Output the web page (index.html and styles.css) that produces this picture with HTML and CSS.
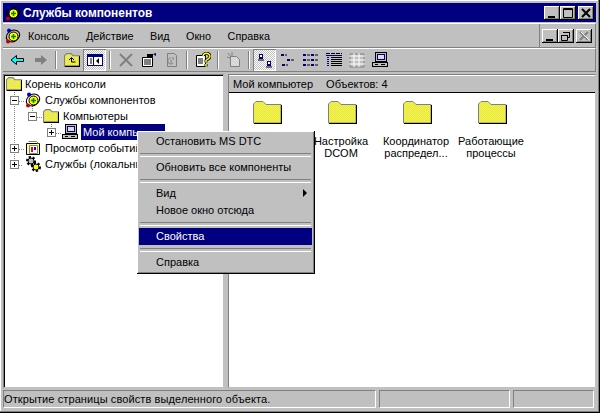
FILE: index.html
```html
<!DOCTYPE html>
<html lang="ru">
<head>
    <meta charset="UTF-8">
    <title>Службы компонентов</title>
    <link rel="stylesheet" href="styles.css">
</head>
<body>
    <svg class="defs" width="0" height="0">
        <defs>
            <pattern id="dither" width="2" height="2" patternUnits="userSpaceOnUse">
                <rect width="2" height="2" fill="#ffff00" shape-rendering="crispEdges"/>
                <rect width="1" height="1" fill="#dcdc90" shape-rendering="crispEdges"/>
                <rect x="1" y="1" width="1" height="1" fill="#dcdc90" shape-rendering="crispEdges"/>
            </pattern>
            <symbol id="folder" viewBox="0 0 15 13">
                <path d="M.5 12.500V2.500L2.500.5h4l2 2h6v10z" fill="url(#dither)" stroke="#808080"/>
                <path d="M1 12.500h14M14.500 3v10" stroke="#000"/>
            </symbol>
            <symbol id="bigfolder" viewBox="0 0 29 24">
                <path d="M.5 23V4L3 1.500h7L13 4.500h15V23z" fill="url(#dither)" stroke="#808080"/>
                <path d="M1 23.500h28M28.500 5v19" stroke="#000"/>
            </symbol>
            <symbol id="mmc" viewBox="0 0 16 16">
                <ellipse cx="8" cy="8" rx="7" ry="5.500" fill="none" stroke="#000" transform="rotate(-30 8 8)"/>
                <circle cx="8.500" cy="8.500" r="4.500" fill="#ffff00" stroke="#000"/>
                <path d="M8.500 6v5M6 8.500h5" stroke="#008000" stroke-width="1.500"/>
                <circle cx="4" cy="2.500" r="2" fill="#0000c0"/>
                <circle cx="3" cy="13.500" r="2" fill="#c00000"/>
            </symbol>
            <symbol id="computer" viewBox="0 0 16 16">
                <rect x="3.500" y=".5" width="11" height="9" fill="#c0c0c0" stroke="#000"/>
                <rect x="5.500" y="2.500" width="7" height="5" fill="#dcdcdc" stroke="#000080"/>
                <rect x=".5" y="10.500" width="15" height="4" fill="#c0c0c0" stroke="#000"/>
                <path d="M3 12.500h3M9 12.500h4" stroke="#000"/>
            </symbol>
        </defs>
    </svg>

    <div class="window">
        <div class="titlebar">
            <svg class="title-icon"><use href="#mmc"/></svg>
            <span class="title-text">Службы компонентов</span>
            <button class="cap-btn first"><svg width="16" height="14"><path d="M4 10h7v2H4z"/></svg></button>
            <button class="cap-btn"><svg width="16" height="14"><path d="M3.500 2.500h9v9h-9zM3 3.500h10" fill="none" stroke="#000"/></svg></button>
            <button class="cap-btn gap"><svg width="16" height="14"><path d="M4 3l8 8M12 3l-8 8" stroke="#000" stroke-width="2"/></svg></button>
        </div>

        <div class="menubar">
            <svg class="menu-icon"><use href="#mmc"/></svg>
            <span class="menu-item">Консоль</span>
            <span class="menu-item">Действие</span>
            <span class="menu-item">Вид</span>
            <span class="menu-item">Окно</span>
            <span class="menu-item">Справка</span>
            <div class="mdi-btns">
                <button class="cap-btn first"><svg width="16" height="14"><path d="M4 10h7v2H4z"/></svg></button>
                <button class="cap-btn"><svg width="16" height="14"><path d="M5.500 3.500h6v5h-2M3.500 6.500h6v5h-6zM3 6.500h7M5 3.500h7" fill="none" stroke="#000"/></svg></button>
                <button class="cap-btn gap"><svg width="16" height="14"><path d="M4 3l8 8M12 3l-8 8" stroke="#808080" stroke-width="2"/><path d="M5 3l8 8" stroke="#fff"/></svg></button>
            </div>
        </div>

        <div class="toolbar">
            <span class="tool"><svg width="16" height="16"><path d="M1 8l5.500-4.500v3h7v3h-7v3z" fill="#00ffff" stroke="#000"/></svg></span>
            <span class="tool"><svg width="16" height="16"><path d="M14 8L8 3v3H2v4h6v3z" fill="#808080"/></svg></span>
            <span class="sep"></span>
            <span class="tool"><svg width="16" height="16"><use href="#folder"/><path d="M5 8l2.500-2.500L10 8M7.500 6v4h4" fill="none" stroke="#000"/></svg></span>
            <span class="tool on"><svg width="16" height="16"><rect x=".5" y="2.500" width="15" height="11" fill="#fff" stroke="#000080"/><rect x="1" y="3" width="14" height="2" fill="#000080"/><path d="M6.500 3v10" stroke="#000080"/><path d="M3 7h2M3 9h2M3 11h2" stroke="#000"/><path d="M12 6v6l-3-3z"/></svg></span>
            <span class="sep"></span>
            <span class="tool"><svg width="16" height="16"><path d="M2 2l12 12M14 2L2 14" stroke="#808080" stroke-width="2"/></svg></span>
            <span class="tool"><svg width="16" height="16"><path d="M1.500 5.500h10v9h-10z" fill="#fff" stroke="#000"/><path d="M3 8h7M3 10h7M3 12h7" stroke="#000"/><path d="M6 2h6v3H6z" fill="#000"/><path d="M12 2l3-1v3z" fill="#000080"/></svg></span>
            <span class="tool"><svg width="16" height="16"><path d="M3.500 1.500h7l2 2v11h-9z" fill="none" stroke="#808080"/><path d="M7 6a3 3 0 1 0 2 5M9 5v3M7 11v-3" fill="none" stroke="#808080"/></svg></span>
            <span class="sep"></span>
            <span class="tool"><svg width="16" height="16"><path d="M1.500 3.500h9v11h-9z" fill="#fff" stroke="#000"/><path d="M3 7h5M3 9h5M3 11h5" stroke="#000"/><path d="M8 4a3.500 3 0 1 1 5 3l-2 1.500v2M11 12v2.500" fill="none" stroke="#000" stroke-width="3"/><path d="M8 4a3.500 3 0 1 1 5 3l-2 1.500v2M11 12v2.500" fill="none" stroke="#ffff00" stroke-width="1.500"/></svg></span>
            <span class="sep"></span>
            <span class="tool"><svg width="16" height="16"><path d="M4.500 4.500h6l3 3v7h-9z" fill="#d8d8d8" stroke="#808080"/><path d="M2 1l3 4M6 0v4M1 5l3 1" stroke="#808080"/></svg></span>
            <span class="sep"></span>
            <span class="tool on"><svg width="16" height="16"><path d="M2 2h4v5H2zM10 9h4v5h-4z" fill="#000080"/><path d="M3 3h2v2H3zM11 10h2v2h-2z" fill="#fff"/><path d="M1 8h6M9 15h6" stroke="#000"/></svg></span>
            <span class="tool"><svg width="16" height="16"><path d="M1 2h3v2H1zM7 7h3v2H7zM2 12h3v2H2z" fill="#000080"/><path d="M5 3h2M11 8h3M6 13h2" stroke="#000"/></svg></span>
            <span class="tool"><svg width="16" height="16"><path d="M0 2h3v2H0zM8 2h3v2H8zM0 7h3v2H0zM8 7h3v2H8zM0 12h3v2H0zM8 12h3v2H8z" fill="#000080"/><path d="M4 3h3M12 3h3M4 8h3M12 8h3M4 13h3M12 13h3" stroke="#000"/></svg></span>
            <span class="tool"><svg width="16" height="16"><path d="M0 1.500h16" stroke="#000" stroke-dasharray="4 1"/><path d="M0 3.500h16" stroke="#000080"/><path d="M5 5h11v1H5zM5 7h11v1H5zM5 9h11v1H5zM5 11h11v1H5zM5 13h11v1H5z"/><path d="M1 5h2v1H1zM1 7h2v1H1zM1 9h2v1H1zM1 11h2v1H1zM1 13h2v1H1z" fill="#000080"/></svg></span>
            <span class="tool"><svg width="16" height="16"><path d="M1 2h14v13H1z" fill="none" stroke="#808080"/><path d="M0 4h16M5 1v14M10 1v14M0 8h16M0 12h16" stroke="#fff"/></svg></span>
            <span class="tool"><svg width="16" height="16"><use href="#computer"/></svg></span>
        </div>

        <div class="panes">
            <div class="tree">
                <svg class="tree-lines" width="90" height="110">
                    <path d="M13.500 14v76M31.500 30v14M50.500 46v12M18 27.500h6M36 43.500h8M55 59.500h6M18 75.500h6M18 91.500h4" fill="none" stroke="#808080" stroke-dasharray="1 1"/>
                </svg>
                <div class="node root">
                    <svg class="node-icon"><use href="#folder"/></svg>
                    <span class="label">Корень консоли</span>
                </div>
                <div class="node lvl1">
                    <span class="box minus"></span>
                    <svg class="node-icon"><use href="#mmc"/></svg>
                    <span class="label">Службы компонентов</span>
                </div>
                <div class="node lvl2">
                    <span class="box minus"></span>
                    <svg class="node-icon"><use href="#folder"/></svg>
                    <span class="label">Компьютеры</span>
                </div>
                <div class="node lvl3">
                    <span class="box plus"></span>
                    <svg class="node-icon"><use href="#computer"/></svg>
                    <span class="label selected"><span class="cut">Мой компьютер</span></span>
                </div>
                <div class="node lvl1">
                    <span class="box plus"></span>
                    <svg class="node-icon"><path d="M1.500 3.500h13v11h-13z" fill="#ffff80" stroke="#000"/><path d="M3.500 1.500h8l2 2" fill="#ffff80" stroke="#808080"/><path d="M4.500 5.500h8v8h-8z" fill="#fff" stroke="#808080"/><path d="M6 7h2v5H6z" fill="#f00"/><path d="M9 7h2v3H9z" fill="#00f"/></svg>
                    <span class="label">Просмотр событий</span>
                </div>
                <div class="node lvl1">
                    <span class="box plus"></span>
                    <svg class="node-icon"><circle cx="6" cy="5" r="3.500" fill="none" stroke="#000" stroke-width="3" stroke-dasharray="2 1.500"/><circle cx="6" cy="5" r="3" fill="#c0c0c0" stroke="#000"/><circle cx="11" cy="11" r="3.500" fill="none" stroke="#000" stroke-width="3" stroke-dasharray="2 1.500"/><circle cx="11" cy="11" r="3" fill="#ffff00" stroke="#000"/></svg>
                    <span class="label">Службы (локальные)</span>
                </div>
            </div>

            <div class="list">
                <div class="list-head">
                    <span>Мой компьютер</span>
                    <span>Объектов: 4</span>
                </div>
                <div class="icons">
                    <div class="icon-item"><svg class="big-icon"><use href="#bigfolder"/></svg></div>
                    <div class="icon-item"><svg class="big-icon"><use href="#bigfolder"/></svg><span>Настройка DCOM</span></div>
                    <div class="icon-item"><svg class="big-icon"><use href="#bigfolder"/></svg><span>Координатор распредел...</span></div>
                    <div class="icon-item"><svg class="big-icon"><use href="#bigfolder"/></svg><span>Работающие процессы</span></div>
                </div>
            </div>
        </div>

        <div class="status">
            <div class="cell main">Открытие страницы свойств выделенного объекта.</div>
            <div class="cell mid"></div>
            <div class="cell end"></div>
        </div>
    </div>

    <div class="context-menu">
        <div class="ctx-item">Остановить MS DTC</div>
        <div class="ctx-sep"></div>
        <div class="ctx-item">Обновить все компоненты</div>
        <div class="ctx-sep"></div>
        <div class="ctx-item">Вид<span class="arrow"></span></div>
        <div class="ctx-item">Новое окно отсюда</div>
        <div class="ctx-sep"></div>
        <div class="ctx-item active">Свойства</div>
        <div class="ctx-sep"></div>
        <div class="ctx-item">Справка</div>
    </div>
</body>
</html>
```

FILE: styles.css
```css
* {
    box-sizing: border-box;
}
html, body {
    margin: 0;
    padding: 0;
}
body {
    width: 600px;
    height: 413px;
    overflow: hidden;
    position: relative;
    font-family: "Liberation Sans", Arial, sans-serif;
    font-size: 11px;
    color: #000;
    background: #c0c0c0;
}
.defs {
    position: absolute;
}
svg {
    display: block;
    flex: none;
}

/* window frame */
.window {
    width: 600px;
    height: 413px;
    padding: 3px 3px 4px;
    display: flex;
    flex-direction: column;
    background: #c0c0c0;
    border-right: 1px solid #000;
    border-bottom: 1px solid #000;
    box-shadow: inset -1px -1px 0 #808080, inset 1px 1px 0 #fff;
}
.titlebar {
    height: 19px;
    flex: none;
    display: flex;
    align-items: center;
    padding: 0 2px;
    background: #000080;
    color: #fff;
}
.title-icon {
    width: 16px;
    height: 16px;
    margin-right: 2px;
}
.title-text {
    font-weight: bold;
    font-size: 11.900px;
    flex: 1;
}
.cap-btn {
    width: 16px;
    height: 14px;
    padding: 0;
    background: #c0c0c0;
    border: none;
    box-shadow: inset -1px -1px 0 #000, inset 1px 1px 0 #fff, inset -2px -2px 0 #808080;
}
.cap-btn.gap {
    margin-left: 2px;
}

/* menu and toolbar */
.menubar {
    height: 25px;
    margin-top: 1px;
    flex: none;
    display: flex;
    align-items: center;
    padding: 0 0 0 2px;
    font-size: 10.800px;
    border-top: 1px solid #fff;
    border-bottom: 1px solid #808080;
    border-right: 1px solid #808080;
}
.menu-icon {
    width: 16px;
    height: 16px;
    margin-right: 2px;
}
.menu-item {
    padding: 0 5px;
    margin-right: 6.500px;
}
.mdi-btns {
    margin-left: auto;
    height: 100%;
    display: flex;
    align-items: center;
    padding: 0 3px 0 2px;
    border-left: 1px solid #808080;
}
.toolbar {
    height: 24px;
    flex: none;
    display: flex;
    align-items: center;
    padding-left: 3px;
    border-top: 1px solid #fff;
    border-bottom: 1px solid #808080;
    border-right: 1px solid #808080;
}
.tool {
    width: 23px;
    height: 22px;
    display: flex;
    align-items: center;
    justify-content: center;
}
.tool.on {
    background: repeating-conic-gradient(#fff 0 25%, #c0c0c0 0 50%) 0 0 / 2px 2px;
    box-shadow: inset 1px 1px 0 #808080, inset -1px -1px 0 #fff;
}
.sep {
    width: 2px;
    height: 18px;
    margin: 0 3px;
    border-left: 1px solid #808080;
    border-right: 1px solid #fff;
}

/* panes */
.panes {
    flex: 1;
    min-height: 0;
    display: flex;
    gap: 4px;
    margin-top: 2px;
    padding-bottom: 2px;
}
.tree {
    width: 221px;
    position: relative;
    padding: 1px 0 0 3px;
    background: #fff;
    overflow: hidden;
    border: 1px solid;
    border-color: #808080 #c0c0c0 #c0c0c0 #808080;
    box-shadow: inset 1px 1px 0 #000;
}
.tree-lines {
    position: absolute;
    left: -3px;
    top: -1px;
}
.node {
    height: 16px;
    display: flex;
    align-items: center;
    position: relative;
    white-space: nowrap;
}
.node.root {
    margin-left: -1px;
}
.node.root .node-icon {
    margin-right: 1px;
}
.node.lvl1 {
    padding-left: 3px;
}
.node.lvl2 {
    padding-left: 21px;
}
.node.lvl3 {
    padding-left: 40px;
}
.box {
    width: 9px;
    height: 9px;
    margin-right: 6px;
    flex: none;
    border: 1px solid #808080;
    background: #fff;
}
.box.minus {
    background: linear-gradient(#000, #000) center / 5px 1px no-repeat #fff;
}
.box.plus {
    background:
        linear-gradient(#000, #000) center / 5px 1px no-repeat,
        linear-gradient(#000, #000) center / 1px 5px no-repeat,
        #fff;
}
.node-icon {
    width: 16px;
    height: 16px;
    margin-right: 2px;
}
.label {
    padding: 1px 2px;
    line-height: 14px;
}
.selected {
    margin-left: 1px;
    width: 84px;
    background: #000080;
    color: #fff;
}
.cut {
    display: block;
    width: 54px;
    overflow: hidden;
}
.list {
    flex: 1;
    display: flex;
    flex-direction: column;
    background: #fff;
    border: 1px solid;
    border-color: #808080 #c0c0c0 #c0c0c0 #808080;
}
.list-head {
    height: 18px;
    flex: none;
    display: flex;
    gap: 13px;
    align-items: center;
    padding-left: 4px;
    background: #c0c0c0;
    border-top: 1px solid #fff;
    border-bottom: 1px solid #000;
}
.icons {
    display: grid;
    grid-template-columns: repeat(4, 75px);
    padding: 7px 0 0 1px;
}
.icon-item {
    display: flex;
    flex-direction: column;
    align-items: center;
    text-align: center;
    line-height: 12px;
}
.icon-item span {
    padding-right: 3px;
}
.big-icon {
    width: 29px;
    height: 24px;
    margin-bottom: 11px;
}

/* status bar */
.status {
    height: 18px;
    flex: none;
    display: flex;
    gap: 3px;
}
.cell {
    line-height: 16px;
    white-space: nowrap;
    letter-spacing: .1px;
    border: 1px solid;
    border-color: #808080 #fff #fff #808080;
}
.cell.main {
    width: 373px;
}
.cell.mid {
    width: 131px;
}
.cell.end {
    flex: 1;
    margin-right: 2px;
}

/* context menu */
.context-menu {
    position: absolute;
    left: 137px;
    top: 131px;
    width: 178px;
    padding: 2px 3px 3px 2px;
    background: #c0c0c0;
    box-shadow: inset -1px -1px 0 #000, inset 1px 1px 0 #fff, inset -2px -2px 0 #808080;
}
.ctx-item {
    height: 17px;
    padding-left: 17px;
    line-height: 16px;
    position: relative;
}
.ctx-item.active {
    background: #000080;
    color: #fff;
}
.ctx-sep {
    height: 9px;
    padding-top: 3px;
    margin: 0 1px;
}
.ctx-sep::before {
    content: "";
    display: block;
    height: 2px;
    border-top: 1px solid #808080;
    border-bottom: 1px solid #fff;
}
.arrow {
    position: absolute;
    right: 5px;
    top: 4px;
    border-left: 4px solid #000;
    border-top: 4px solid transparent;
    border-bottom: 4px solid transparent;
}
```
